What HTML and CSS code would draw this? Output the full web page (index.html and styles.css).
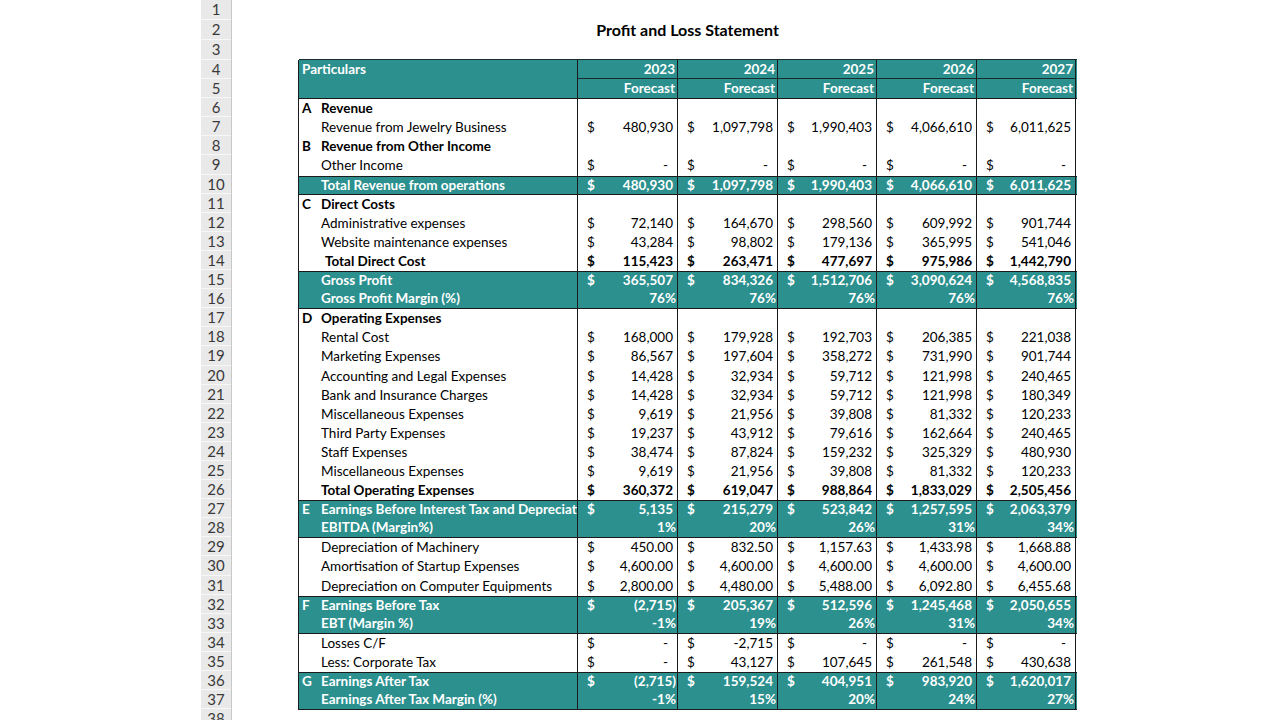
FILE: index.html
```html
<!DOCTYPE html>
<html>
<head>
<meta charset="utf-8">
<link rel="stylesheet" href="styles.css">
</head>
<body>
<div class="sheet">
  <div class="rownums">
    <div class="rn tall">1</div><div class="rn tall">2</div><div class="rn tall">3</div>
    <div class="rn">4</div><div class="rn">5</div><div class="rn">6</div><div class="rn">7</div><div class="rn">8</div><div class="rn">9</div>
    <div class="rn">10</div><div class="rn">11</div><div class="rn">12</div><div class="rn">13</div><div class="rn">14</div><div class="rn">15</div>
    <div class="rn">16</div><div class="rn">17</div><div class="rn">18</div><div class="rn">19</div><div class="rn">20</div><div class="rn">21</div>
    <div class="rn">22</div><div class="rn">23</div><div class="rn">24</div><div class="rn">25</div><div class="rn">26</div><div class="rn">27</div>
    <div class="rn">28</div><div class="rn">29</div><div class="rn">30</div><div class="rn">31</div><div class="rn">32</div><div class="rn">33</div>
    <div class="rn">34</div><div class="rn">35</div><div class="rn">36</div><div class="rn">37</div><div class="rn">38</div>
  </div>
  <div class="content">
    <div class="titlearea"><div class="title">Profit and Loss Statement</div></div>
    <div class="pl">
      <div class="head">
        <div class="hp">Particulars</div>
        <div class="hy">2023</div><div class="hy">2024</div><div class="hy">2025</div><div class="hy">2026</div><div class="hy">2027</div>
        <div class="hf">Forecast</div><div class="hf">Forecast</div><div class="hf">Forecast</div><div class="hf">Forecast</div><div class="hf">Forecast</div>
      </div>

      <div class="row bold"><div class="lab"><span class="let">A</span>Revenue</div><div class="v"></div><div class="v"></div><div class="v"></div><div class="v"></div><div class="v"></div></div>
      <div class="row"><div class="lab"><span class="let"></span>Revenue from Jewelry Business</div>
        <div class="v"><span>$</span><span class="n">480,930</span></div><div class="v"><span>$</span><span class="n">1,097,798</span></div><div class="v"><span>$</span><span class="n">1,990,403</span></div><div class="v"><span>$</span><span class="n">4,066,610</span></div><div class="v"><span>$</span><span class="n">6,011,625</span></div></div>
      <div class="row bold"><div class="lab"><span class="let">B</span>Revenue from Other Income</div><div class="v"></div><div class="v"></div><div class="v"></div><div class="v"></div><div class="v"></div></div>
      <div class="row"><div class="lab"><span class="let"></span>Other Income</div>
        <div class="v"><span>$</span><span class="d">-</span></div><div class="v"><span>$</span><span class="d">-</span></div><div class="v"><span>$</span><span class="d">-</span></div><div class="v"><span>$</span><span class="d">-</span></div><div class="v"><span>$</span><span class="d">-</span></div></div>
      <div class="row teal tb bb"><div class="lab"><span class="let"></span>Total Revenue from operations</div>
        <div class="v"><span>$</span><span class="n">480,930</span></div><div class="v"><span>$</span><span class="n">1,097,798</span></div><div class="v"><span>$</span><span class="n">1,990,403</span></div><div class="v"><span>$</span><span class="n">4,066,610</span></div><div class="v"><span>$</span><span class="n">6,011,625</span></div></div>
      <div class="row bold"><div class="lab"><span class="let">C</span>Direct Costs</div><div class="v"></div><div class="v"></div><div class="v"></div><div class="v"></div><div class="v"></div></div>
      <div class="row"><div class="lab"><span class="let"></span>Administrative expenses</div>
        <div class="v"><span>$</span><span class="n">72,140</span></div><div class="v"><span>$</span><span class="n">164,670</span></div><div class="v"><span>$</span><span class="n">298,560</span></div><div class="v"><span>$</span><span class="n">609,992</span></div><div class="v"><span>$</span><span class="n">901,744</span></div></div>
      <div class="row"><div class="lab"><span class="let"></span>Website maintenance expenses</div>
        <div class="v"><span>$</span><span class="n">43,284</span></div><div class="v"><span>$</span><span class="n">98,802</span></div><div class="v"><span>$</span><span class="n">179,136</span></div><div class="v"><span>$</span><span class="n">365,995</span></div><div class="v"><span>$</span><span class="n">541,046</span></div></div>
      <div class="row bold"><div class="lab"><span class="let"></span><span class="ind">Total Direct Cost</span></div>
        <div class="v"><span>$</span><span class="n">115,423</span></div><div class="v"><span>$</span><span class="n">263,471</span></div><div class="v"><span>$</span><span class="n">477,697</span></div><div class="v"><span>$</span><span class="n">975,986</span></div><div class="v"><span>$</span><span class="n">1,442,790</span></div></div>
      <div class="row teal tb"><div class="lab"><span class="let"></span>Gross Profit</div>
        <div class="v"><span>$</span><span class="n">365,507</span></div><div class="v"><span>$</span><span class="n">834,326</span></div><div class="v"><span>$</span><span class="n">1,512,706</span></div><div class="v"><span>$</span><span class="n">3,090,624</span></div><div class="v"><span>$</span><span class="n">4,568,835</span></div></div>
      <div class="row teal bb"><div class="lab"><span class="let"></span>Gross Profit Margin (%)</div>
        <div class="v"><span></span><span class="p">76%</span></div><div class="v"><span></span><span class="p">76%</span></div><div class="v"><span></span><span class="p">76%</span></div><div class="v"><span></span><span class="p">76%</span></div><div class="v"><span></span><span class="p">76%</span></div></div>
      <div class="row bold"><div class="lab"><span class="let">D</span>Operating Expenses</div><div class="v"></div><div class="v"></div><div class="v"></div><div class="v"></div><div class="v"></div></div>
      <div class="row"><div class="lab"><span class="let"></span>Rental Cost</div>
        <div class="v"><span>$</span><span class="n">168,000</span></div><div class="v"><span>$</span><span class="n">179,928</span></div><div class="v"><span>$</span><span class="n">192,703</span></div><div class="v"><span>$</span><span class="n">206,385</span></div><div class="v"><span>$</span><span class="n">221,038</span></div></div>
      <div class="row"><div class="lab"><span class="let"></span>Marketing Expenses</div>
        <div class="v"><span>$</span><span class="n">86,567</span></div><div class="v"><span>$</span><span class="n">197,604</span></div><div class="v"><span>$</span><span class="n">358,272</span></div><div class="v"><span>$</span><span class="n">731,990</span></div><div class="v"><span>$</span><span class="n">901,744</span></div></div>
      <div class="row"><div class="lab"><span class="let"></span>Accounting and Legal Expenses</div>
        <div class="v"><span>$</span><span class="n">14,428</span></div><div class="v"><span>$</span><span class="n">32,934</span></div><div class="v"><span>$</span><span class="n">59,712</span></div><div class="v"><span>$</span><span class="n">121,998</span></div><div class="v"><span>$</span><span class="n">240,465</span></div></div>
      <div class="row"><div class="lab"><span class="let"></span>Bank and Insurance Charges</div>
        <div class="v"><span>$</span><span class="n">14,428</span></div><div class="v"><span>$</span><span class="n">32,934</span></div><div class="v"><span>$</span><span class="n">59,712</span></div><div class="v"><span>$</span><span class="n">121,998</span></div><div class="v"><span>$</span><span class="n">180,349</span></div></div>
      <div class="row"><div class="lab"><span class="let"></span>Miscellaneous Expenses</div>
        <div class="v"><span>$</span><span class="n">9,619</span></div><div class="v"><span>$</span><span class="n">21,956</span></div><div class="v"><span>$</span><span class="n">39,808</span></div><div class="v"><span>$</span><span class="n">81,332</span></div><div class="v"><span>$</span><span class="n">120,233</span></div></div>
      <div class="row"><div class="lab"><span class="let"></span>Third Party Expenses</div>
        <div class="v"><span>$</span><span class="n">19,237</span></div><div class="v"><span>$</span><span class="n">43,912</span></div><div class="v"><span>$</span><span class="n">79,616</span></div><div class="v"><span>$</span><span class="n">162,664</span></div><div class="v"><span>$</span><span class="n">240,465</span></div></div>
      <div class="row"><div class="lab"><span class="let"></span>Staff Expenses</div>
        <div class="v"><span>$</span><span class="n">38,474</span></div><div class="v"><span>$</span><span class="n">87,824</span></div><div class="v"><span>$</span><span class="n">159,232</span></div><div class="v"><span>$</span><span class="n">325,329</span></div><div class="v"><span>$</span><span class="n">480,930</span></div></div>
      <div class="row"><div class="lab"><span class="let"></span>Miscellaneous Expenses</div>
        <div class="v"><span>$</span><span class="n">9,619</span></div><div class="v"><span>$</span><span class="n">21,956</span></div><div class="v"><span>$</span><span class="n">39,808</span></div><div class="v"><span>$</span><span class="n">81,332</span></div><div class="v"><span>$</span><span class="n">120,233</span></div></div>
      <div class="row bold"><div class="lab"><span class="let"></span>Total Operating Expenses</div>
        <div class="v"><span>$</span><span class="n">360,372</span></div><div class="v"><span>$</span><span class="n">619,047</span></div><div class="v"><span>$</span><span class="n">988,864</span></div><div class="v"><span>$</span><span class="n">1,833,029</span></div><div class="v"><span>$</span><span class="n">2,505,456</span></div></div>
      <div class="row teal tb"><div class="lab"><span class="let">E</span><span class="clip">Earnings Before Interest Tax and Depreciation and Amortisation</span></div>
        <div class="v"><span>$</span><span class="n">5,135</span></div><div class="v"><span>$</span><span class="n">215,279</span></div><div class="v"><span>$</span><span class="n">523,842</span></div><div class="v"><span>$</span><span class="n">1,257,595</span></div><div class="v"><span>$</span><span class="n">2,063,379</span></div></div>
      <div class="row teal bb"><div class="lab"><span class="let"></span>EBITDA (Margin%)</div>
        <div class="v"><span></span><span class="p">1%</span></div><div class="v"><span></span><span class="p">20%</span></div><div class="v"><span></span><span class="p">26%</span></div><div class="v"><span></span><span class="p">31%</span></div><div class="v"><span></span><span class="p">34%</span></div></div>
      <div class="row"><div class="lab"><span class="let"></span>Depreciation of Machinery</div>
        <div class="v"><span>$</span><span class="n">450.00</span></div><div class="v"><span>$</span><span class="n">832.50</span></div><div class="v"><span>$</span><span class="n">1,157.63</span></div><div class="v"><span>$</span><span class="n">1,433.98</span></div><div class="v"><span>$</span><span class="n">1,668.88</span></div></div>
      <div class="row"><div class="lab"><span class="let"></span>Amortisation of Startup Expenses</div>
        <div class="v"><span>$</span><span class="n">4,600.00</span></div><div class="v"><span>$</span><span class="n">4,600.00</span></div><div class="v"><span>$</span><span class="n">4,600.00</span></div><div class="v"><span>$</span><span class="n">4,600.00</span></div><div class="v"><span>$</span><span class="n">4,600.00</span></div></div>
      <div class="row"><div class="lab"><span class="let"></span>Depreciation on Computer Equipments</div>
        <div class="v"><span>$</span><span class="n">2,800.00</span></div><div class="v"><span>$</span><span class="n">4,480.00</span></div><div class="v"><span>$</span><span class="n">5,488.00</span></div><div class="v"><span>$</span><span class="n">6,092.80</span></div><div class="v"><span>$</span><span class="n">6,455.68</span></div></div>
      <div class="row teal tb"><div class="lab"><span class="let">F</span>Earnings Before Tax</div>
        <div class="v"><span>$</span><span class="p">(2,715)</span></div><div class="v"><span>$</span><span class="n">205,367</span></div><div class="v"><span>$</span><span class="n">512,596</span></div><div class="v"><span>$</span><span class="n">1,245,468</span></div><div class="v"><span>$</span><span class="n">2,050,655</span></div></div>
      <div class="row teal bb"><div class="lab"><span class="let"></span>EBT (Margin %)</div>
        <div class="v"><span></span><span class="p">-1%</span></div><div class="v"><span></span><span class="p">19%</span></div><div class="v"><span></span><span class="p">26%</span></div><div class="v"><span></span><span class="p">31%</span></div><div class="v"><span></span><span class="p">34%</span></div></div>
      <div class="row"><div class="lab"><span class="let"></span>Losses C/F</div>
        <div class="v"><span>$</span><span class="d">-</span></div><div class="v"><span>$</span><span class="n">-2,715</span></div><div class="v"><span>$</span><span class="d">-</span></div><div class="v"><span>$</span><span class="d">-</span></div><div class="v"><span>$</span><span class="d">-</span></div></div>
      <div class="row"><div class="lab"><span class="let"></span>Less: Corporate Tax</div>
        <div class="v"><span>$</span><span class="d">-</span></div><div class="v"><span>$</span><span class="n">43,127</span></div><div class="v"><span>$</span><span class="n">107,645</span></div><div class="v"><span>$</span><span class="n">261,548</span></div><div class="v"><span>$</span><span class="n">430,638</span></div></div>
      <div class="row teal tb"><div class="lab"><span class="let">G</span>Earnings After Tax</div>
        <div class="v"><span>$</span><span class="p">(2,715)</span></div><div class="v"><span>$</span><span class="n">159,524</span></div><div class="v"><span>$</span><span class="n">404,951</span></div><div class="v"><span>$</span><span class="n">983,920</span></div><div class="v"><span>$</span><span class="n">1,620,017</span></div></div>
      <div class="row teal bb"><div class="lab"><span class="let"></span>Earnings After Tax Margin (%)</div>
        <div class="v"><span></span><span class="p">-1%</span></div><div class="v"><span></span><span class="p">15%</span></div><div class="v"><span></span><span class="p">20%</span></div><div class="v"><span></span><span class="p">24%</span></div><div class="v"><span></span><span class="p">27%</span></div></div>
    </div>
  </div>
</div>
</body>
</html>
```
FILE: styles.css
```css
html, body {
  margin: 0;
  padding: 0;
  background: #ffffff;
}
body {
  font-family: Lato, "Open Sans", sans-serif;
  color: #000;
  width: 1280px;
  height: 720px;
  overflow: hidden;
}
.sheet {
  display: flex;
  align-items: flex-start;
}
.rownums {
  margin-left: 201px;
  width: 30px;
  display: flex;
  flex-direction: column;
  border-right: 1px solid #c8c8c8;
}
.rn {
  box-sizing: border-box;
  height: 19.1px;
  background: #e9e9e9;
  border-bottom: 1px solid #f7f7f7;
  color: #3a3a3a;
  font-size: 15px;
  line-height: 18px;
  text-align: center;
}
.rn.tall {
  height: 20px;
  line-height: 19px;
}
.content {
  margin-left: 66px;
  display: flex;
  flex-direction: column;
}
.titlearea {
  height: 60px;
  display: flex;
  justify-content: center;
}
.title {
  margin-top: 20px;
  height: 20px;
  line-height: 20px;
  font-weight: 700;
  font-size: 16px;
}
.pl {
  width: 778px;
  font-size: 13.5px;
  border-left: 1px solid #1b1b1b;
}
.head {
  display: grid;
  grid-template-columns: 279px 100px 100px 99px 100px 99px;
  grid-template-rows: 19.1px 19.1px;
  background: #2b908e;
  color: #fff;
  font-weight: 700;
  border-top: 1px solid #1b2a2a;
  border-bottom: 1px solid #1b1b1b;
  margin-top: -1px;
}
.hp {
  grid-row: 1 / span 2;
  border-right: 1px solid #1b1b1b;
  padding-left: 3px;
  line-height: 19px;
}
.hy, .hf {
  box-sizing: border-box;
  border-right: 1px solid #1b1b1b;
  text-align: right;
  padding-right: 2px;
  line-height: 18px;
}
.hy {
  border-bottom: 1px solid #1b2a2a;
}
.row {
  box-sizing: border-box;
  height: 19.1px;
  display: grid;
  grid-template-columns: 279px 100px 100px 99px 100px 99px;
  line-height: 18px;
}
.row.bold {
  font-weight: 700;
}
.row.teal {
  background: #2b908e;
  color: #fff;
  font-weight: 700;
}
.row.tb {
  border-top: 1px solid #1b1b1b;
  line-height: 17px;
}
.row.bb {
  border-bottom: 1px solid #1b1b1b;
  line-height: 17px;
}
.lab {
  border-right: 1px solid #1b1b1b;
  padding-left: 3px;
  white-space: nowrap;
  overflow: hidden;
  display: flex;
}
.clip {
  overflow: hidden;
  min-width: 0;
}
.let {
  width: 19px;
  flex: none;
}
.ind {
  padding-left: 4px;
}
.v {
  border-right: 1px solid #1b1b1b;
  display: flex;
  justify-content: space-between;
  padding-left: 9px;
  white-space: nowrap;
}
.n {
  padding-right: 4px;
}
.p {
  padding-right: 1px;
}
.d {
  padding-right: 9px;
}
```
